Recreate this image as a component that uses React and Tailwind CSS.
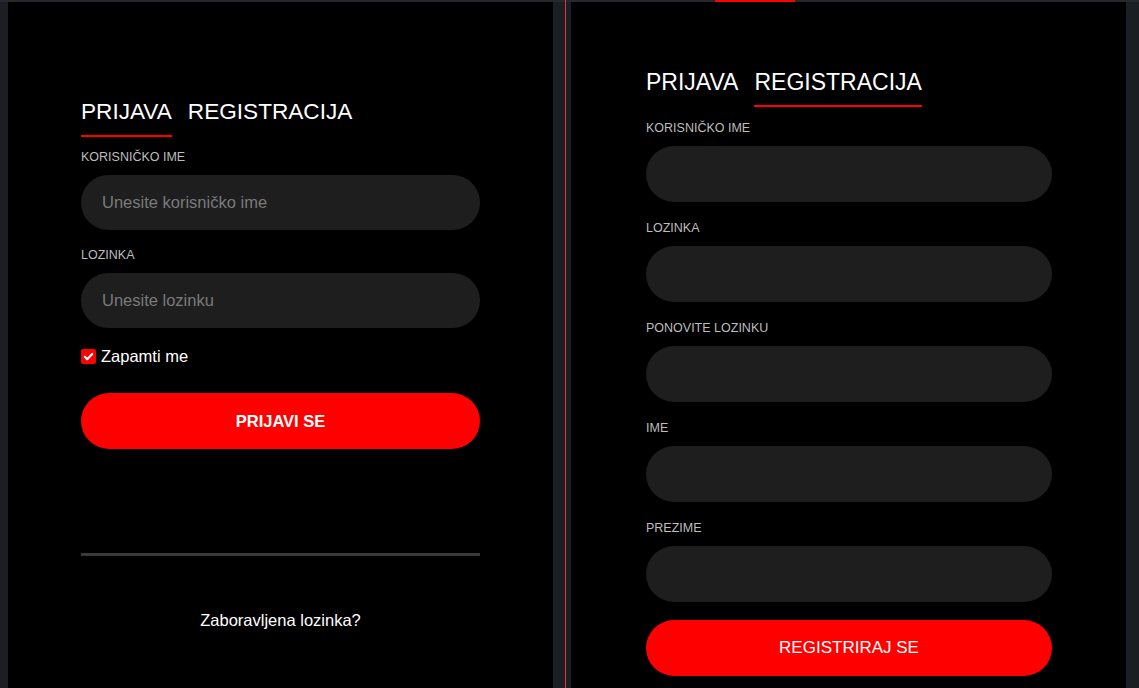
import React from "react";

const font = { fontFamily: '"Liberation Sans", Arial, sans-serif' };

const Field = ({ label, placeholder, first }) => (
  <div className={first ? "mt-[14px]" : "mt-[19px]"}>
    <div className="text-[12.5px] leading-[15px] text-[#bdbdbd]">{label}</div>
    <input
      type="text"
      placeholder={placeholder}
      className="mt-[10px] h-[56px] w-full rounded-full bg-[#1e1e1e] px-[21px] text-[16px] text-white placeholder-[#7a7a7a] outline-none"
    />
  </div>
);

const Tabs = ({ active, size }) => (
  <div className={`flex items-start gap-[16px] leading-[26px] text-white ${size}`}>
    <span className={active === "login" ? "border-b-2 border-[#ff0000] pb-[10px]" : "pb-[10px]"}>PRIJAVA</span>
    <span className={active === "reg" ? "border-b-2 border-[#ff0000] pb-[10px]" : "pb-[10px]"}>REGISTRACIJA</span>
  </div>
);

const App = () => {
  return (
    <div style={font} className="flex h-[688px] w-[1139px] flex-col overflow-hidden bg-[#1b1e22]">
      <div className="flex h-[2px] shrink-0 bg-[#25282c]">
        <div className="ml-[715px] h-[2px] w-[80px] bg-[#ff0000]" />
      </div>
      <div className="flex flex-1 pl-[8px]">
        {/* login */}
        <div className="flex w-[545px] flex-col bg-black px-[73px] pt-[97px]">
          <Tabs active="login" size="text-[22.6px]" />
          <div className="mt-[13px]">
            <div className="text-[12.5px] leading-[15px] text-[#bdbdbd]">KORISNIČKO IME</div>
            <input
              type="text"
              placeholder="Unesite korisničko ime"
              className="mt-[10px] h-[55px] w-[399px] rounded-full bg-[#1e1e1e] px-[21px] text-[16.5px] text-white placeholder-[#7a7a7a] outline-none"
            />
          </div>
          <div className="mt-[18px]">
            <div className="text-[12.5px] leading-[15px] text-[#bdbdbd]">LOZINKA</div>
            <input
              type="password"
              placeholder="Unesite lozinku"
              className="mt-[10px] h-[55px] w-[399px] rounded-full bg-[#1e1e1e] px-[21px] text-[16.5px] text-white placeholder-[#7a7a7a] outline-none"
            />
          </div>
          <label className="mt-[19px] flex items-center gap-[5px] text-[16.5px] leading-[18px] text-white">
            <span className="flex h-[15px] w-[15px] items-center justify-center rounded-[2px] bg-[#ff0000]">
              <svg width="11" height="11" viewBox="0 0 12 12" fill="none">
                <path d="M2 6.3l2.6 2.6L10 3.3" stroke="white" strokeWidth="2.4" strokeLinecap="round" strokeLinejoin="round" />
              </svg>
            </span>
            Zapamti me
          </label>
          <button className="mt-[28px] h-[56px] w-[399px] rounded-full bg-[#ff0000] text-[16.5px] font-bold text-white">
            PRIJAVI SE
          </button>
          <div className="mt-[104px] h-[3px] w-[399px] bg-[#3a3a3a]" />
          <div className="mt-[55px] w-[399px] text-center text-[16.5px] leading-[18px] text-white">
            Zaboravljena lozinka?
          </div>
        </div>

        <div className="ml-[12px] mt-[-2px] w-px bg-[#e0353e]" />

        {/* registration */}
        <div className="ml-[5px] flex w-[555px] flex-col bg-black pl-[75px] pr-[74px] pt-[67px]">
          <Tabs active="reg" size="text-[23px]" />
          <Field label="KORISNIČKO IME" first />
          <Field label="LOZINKA" />
          <Field label="PONOVITE LOZINKU" />
          <Field label="IME" />
          <Field label="PREZIME" />
          <button className="mt-[18px] h-[56px] w-full shrink-0 rounded-full bg-[#ff0000] text-[17px] text-white">
            REGISTRIRAJ SE
          </button>
        </div>
      </div>
    </div>
  );
};

export default App;
